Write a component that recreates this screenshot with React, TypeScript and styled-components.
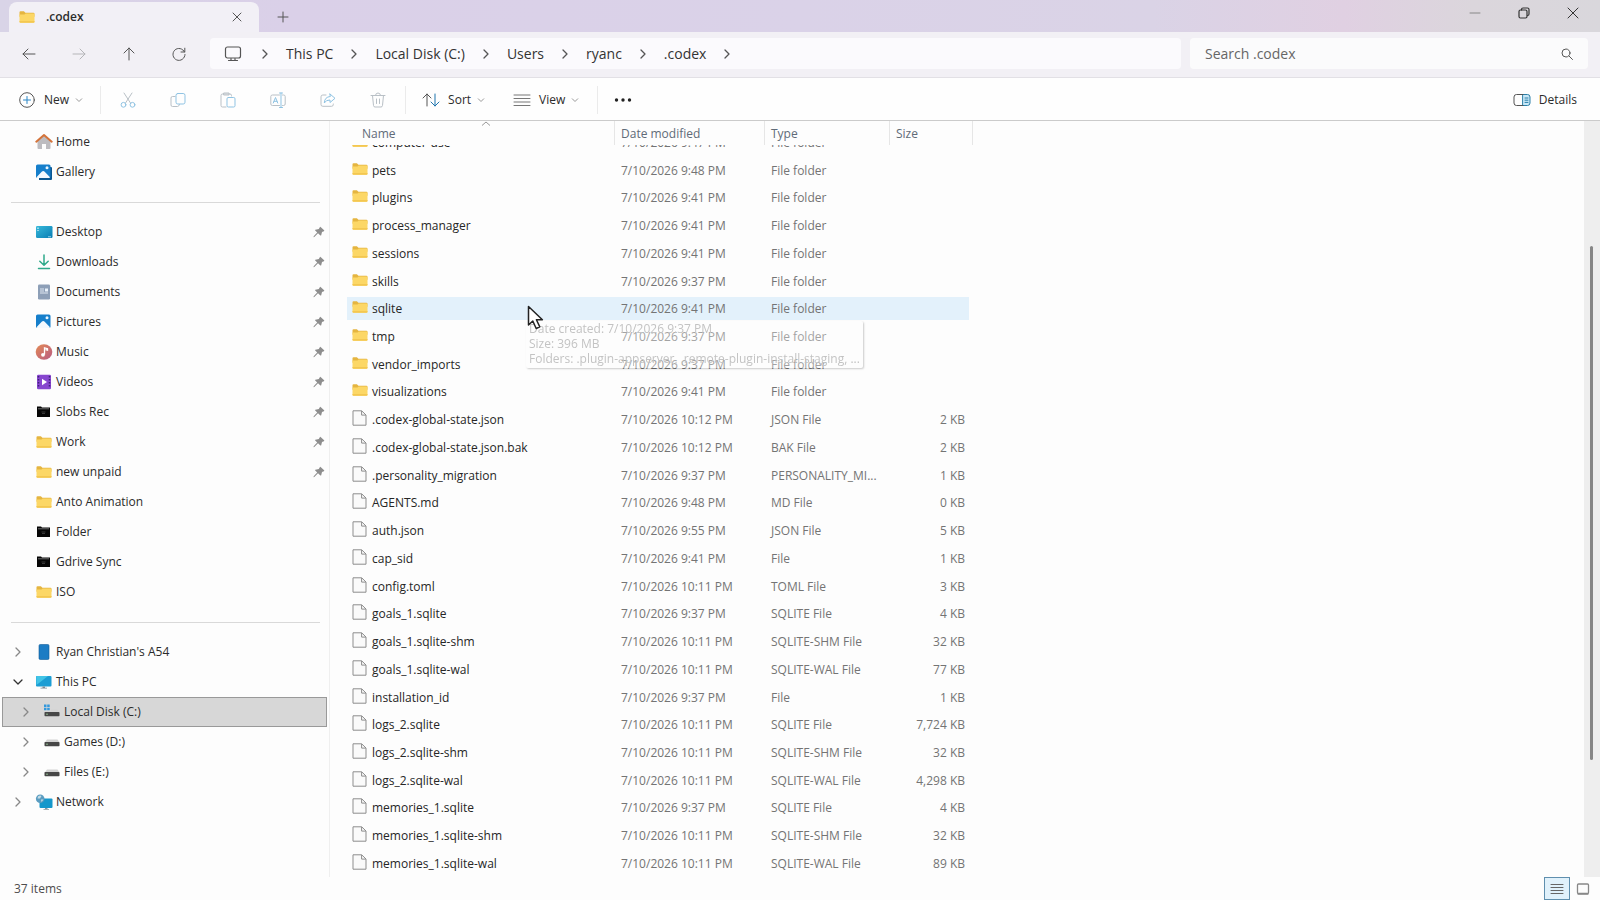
import React, { useLayoutEffect, useRef } from "react";
import styled, { createGlobalStyle, css } from "styled-components";

const GlobalStyle = createGlobalStyle`
  *, *::before, *::after { box-sizing: border-box; }
  body {
    margin: 0;
    background: #fdfdfd;
    color: #2b2b2b;
    font-family: "Open Sans", "Noto Sans", sans-serif;
    font-size: 12px;
    line-height: 16px;
  }
  button, input { font: inherit; color: inherit; }
  button { margin: 0; padding: 0; border: 0; background: none; }
  a { color: inherit; text-decoration: none; }
  svg { display: block; flex: none; }
`;

/* ---------- Window frame ---------- */

const Window = styled.div`
  display: flex;
  flex-direction: column;
  height: 100vh;
  overflow: hidden;
`;

const TitleBar = styled.header`
  display: flex;
  align-items: flex-end;
  height: 32px;
  padding-left: 9px;
  background: linear-gradient(90deg, #d9d4e7 0%, #dad0e8 18%, #dad2e8 50%, #dad3e6 72%, #e0d0e2 84%, #dbd6dc 92%, #d9d7dc 100%);
`;

const Tab = styled.div`
  display: flex;
  align-items: center;
  width: 250px;
  height: 30px;
  padding: 0 14px 0 10px;
  border-radius: 8px 8px 0 0;
  background: #f2f0f6;
  font-weight: 600;
`;

const TabTitle = styled.span`
  flex: 1;
  margin-left: 11px;
`;

const IconButton = styled.button<{ $w?: number; $h?: number }>`
  display: flex;
  align-items: center;
  justify-content: center;
  flex: none;
  width: ${(p) => p.$w ?? 36}px;
  height: ${(p) => p.$h ?? 32}px;
`;

const WindowControls = styled.div`
  display: flex;
  align-self: flex-start;
  margin-left: auto;
  padding-right: 3px;
`;

/* ---------- Navigation bar ---------- */

const NavBar = styled.div`
  display: flex;
  align-items: center;
  height: 46px;
  padding: 0 12px 2px 11px;
  border-bottom: 1px solid #e2e0e5;
  background: #f2f0f5;
`;

const NavButtons = styled.div`
  display: flex;
  gap: 14px;
  margin-right: 13px;
`;

const AddressBar = styled.nav`
  display: flex;
  align-items: center;
  flex: 1;
  height: 31px;
  padding-left: 12px;
  border-radius: 4px;
  background: #fbfafd;
  font-size: 14px;
  line-height: 20px;
`;

const Crumb = styled.a`
  color: #333;
  white-space: nowrap;
`;

const CrumbArrow = styled.span`
  display: flex;
  justify-content: center;
  width: 42px;
`;

const SearchBox = styled.label`
  display: flex;
  align-items: center;
  flex: 0 1 398px;
  height: 31px;
  margin-left: 9px;
  padding: 0 14px 0 15px;
  border-radius: 4px;
  background: #fbfbfc;
`;

const SearchInput = styled.input`
  flex: 1;
  min-width: 0;
  padding: 0;
  border: 0;
  outline: 0;
  background: transparent;
  font-size: 14px;
  line-height: 20px;
  &::placeholder { color: #666; opacity: 1; }
`;

/* ---------- Command bar ---------- */

const CommandBar = styled.div`
  display: flex;
  align-items: center;
  height: 43px;
  padding: 2px 17px 0 19px;
  border-bottom: 1px solid #cbcbcb;
  background: #fefefe;
`;

const CommandButton = styled.button<{ $gap?: number }>`
  display: flex;
  align-items: center;
  height: 32px;
  & > span { margin: 0 6px 0 ${(p) => p.$gap ?? 8}px; }
`;

const CommandGroup = styled.div`
  display: flex;
  gap: 28px;
`;

const CommandIcons = styled.div`
  display: flex;
  gap: 14px;
  margin: 0 9px;
`;

const Separator = styled.div<{ $before?: number; $after?: number }>`
  width: 1px;
  height: 28px;
  margin: 0 ${(p) => p.$after ?? 0}px 0 ${(p) => p.$before ?? 0}px;
  background: #ebebeb;
`;

const Spacer = styled.div`
  flex: 1;
`;

/* ---------- Side pane ---------- */

const Body = styled.main`
  display: flex;
  flex: 1;
  min-height: 0;
`;

const SidePane = styled.nav`
  flex: none;
  width: 330px;
  padding: 6px 2px 0;
  border-right: 1px solid #efefef;
  overflow: hidden;
`;

const SideRow = styled.div<{ $nested?: boolean; $selected?: boolean }>`
  display: flex;
  align-items: center;
  height: 30px;
  padding: 0 1px 0 ${(p) => (p.$nested ? 16 : 8)}px;
  border: 1px solid transparent;
  ${(p) =>
    p.$selected &&
    css`
      border-color: #999;
      background: #d7d7d7;
    `}
`;

const ToggleSlot = styled.span`
  display: flex;
  width: 24px;
`;

const SideLink = styled.a`
  display: flex;
  align-items: center;
  gap: 3px;
  flex: 1;
`;

const SideDivider = styled.hr`
  height: 1px;
  margin: 15px 7px 14px 9px;
  border: 0;
  background: #d9d9d9;
`;

/* ---------- File list ---------- */

const FileScroller = styled.div`
  flex: 1;
  min-width: 0;
  padding-left: 17px;
  overflow-y: auto;
  scrollbar-width: none;
`;

const FileTable = styled.table`
  width: 626px;
  height: calc(100% + 17px);
  border-collapse: separate;
  border-spacing: 0;
  table-layout: fixed;
`;

const HeadCell = styled.th`
  position: sticky;
  top: 0;
  z-index: 1;
  height: 24px;
  padding: 2px 0 0 6px;
  border-right: 1px solid #e6e6e6;
  background: #fdfdfd;
  color: #5f6b78;
  font-weight: 400;
  text-align: left;
  &:first-child { padding-left: 15px; }
`;

const SortMark = styled.svg`
  position: absolute;
  top: 0;
  left: 134px;
`;

const FileRow = styled.tr<{ $hover?: boolean }>`
  ${(p) =>
    p.$hover &&
    css`
      & > td { background: linear-gradient(#e3f1fb, #e3f1fb) center / 100% 23px no-repeat; }
      & > td:last-child { background-position: left center; background-size: 79px 23px; }
    `}
`;

const Cell = styled.td<{ $right?: boolean }>`
  padding: 2px ${(p) => (p.$right ? 8 : 6)}px 0;
  color: #747474;
  text-align: ${(p) => (p.$right ? "right" : "left")};
  white-space: nowrap;
`;

const NameCell = styled.td`
  padding: 2px 0 0 5px;
  color: #262626;
`;

const NameBox = styled.div`
  display: flex;
  align-items: center;
  gap: 4px;
  height: 16px;
  & > svg { margin-bottom: 4px; }
`;

const ScrollTrack = styled.div`
  display: flex;
  flex-direction: column;
  align-items: center;
  width: 16px;
  padding-right: 2px;
  background: #eeeeee;
`;

const ScrollThumb = styled.div`
  width: 3px;
  height: 68%;
  margin-top: 125px;
  border-radius: 2px;
  background: #868686;
`;

/* ---------- Status bar ---------- */

const StatusBar = styled.footer`
  display: flex;
  align-items: center;
  height: 23px;
  padding: 0 4px 0 14px;
  color: #4d4d4d;
`;

const ViewToggle = styled.button<{ $on?: boolean }>`
  display: flex;
  align-items: center;
  justify-content: center;
  width: 26px;
  height: 23px;
  border: 1px solid ${(p) => (p.$on ? "#5f8fae" : "transparent")};
  background: ${(p) => (p.$on ? "#e0f1fb" : "transparent")};
`;

/* ---------- Floating layer ---------- */

const Tooltip = styled.div`
  position: absolute;
  top: 321px;
  left: 526px;
  z-index: 2;
  width: 337px;
  height: 47px;
  padding: 0 3px;
  border-radius: 2px;
  box-shadow: 1px 1px 2px rgba(0, 0, 0, 0.2);
  background: rgba(253, 253, 253, 0.35);
  color: #c3c3c3;
  line-height: 15px;
  white-space: nowrap;
`;

const Pointer = styled.svg`
  position: absolute;
  top: 305px;
  left: 527px;
  z-index: 3;
`;

/* ---------- Icons ---------- */

type StrokeProps = { w?: number; h?: number; color?: string; sw?: number; children: React.ReactNode };

const Stroke = ({ w = 16, h = 16, color = "#555", sw = 1, children }: StrokeProps) => (
  <svg width={w} height={h} viewBox={`0 0 ${w} ${h}`} fill="none" stroke={color} strokeWidth={sw} strokeLinecap="round" strokeLinejoin="round">
    {children}
  </svg>
);

const ChevronRight = ({ color = "#555" }: { color?: string }) => (
  <Stroke w={12} h={12} color={color} sw={1.3}><path d="M4 2l4 4-4 4" /></Stroke>
);
const ChevronDown = ({ color = "#999", size = 8 }: { color?: string; size?: number }) => (
  <svg width={size} height={size} viewBox="0 0 8 8" fill="none" stroke={color} strokeWidth="1">
    <path d="M1 2.5L4 5.5L7 2.5" />
  </svg>
);

const FolderIcon = ({ w = 16 }: { w?: number }) => (
  <svg width={w} height={w} viewBox="0 0 16 16">
    <path d="M.5 3.200q0-1 1-1h3.400l1.500 1.500h8q1.100 0 1.100 1.100v3H.5z" fill="#e5b540" />
    <path d="M.5 5.400h5l1.200-.9h7.800q1 0 1 1v7.300q0 1-1 1h-13q-1 0-1-1z" fill="#fcd766" />
    <path d="M.5 12h15v.8q0 1-1 1h-13q-1 0-1-1z" fill="#f3c752" />
  </svg>
);

const DarkFolderIcon = () => (
  <svg width="18" height="16" viewBox="0 0 18 16">
    <path d="M2 2.500h4l1 1h8V13H2z" fill="#060606" />
    <path d="M3 4.800h11" stroke="#777" strokeWidth=".9" />
    <path d="M6.500 8h4M7 9.500h3" stroke="#444" strokeWidth=".8" />
  </svg>
);

const FileIcon = () => (
  <svg width="16" height="16" viewBox="0 0 16 16">
    <path d="M1 .8h8.700l4.300 4.200v10.200H1z" fill="#fafafa" stroke="#8d8d8d" />
    <path d="M9.600 1v4.100h4.200" fill="none" stroke="#8d8d8d" />
  </svg>
);

const HomeIcon = () => (
  <svg width="18" height="18" viewBox="0 0 18 18">
    <path d="M2.500 7.500L9 2.500l6.500 5V15q0 1-1 1H11v-5H7v5H3.500q-1 0-1-1z" fill="#bdbcc0" />
    <path d="M1.300 8.700L9 2l7.700 6.700" fill="none" stroke="#d4733a" strokeWidth="2" strokeLinecap="round" strokeLinejoin="round" />
  </svg>
);

const PictureIcon = ({ stacked }: { stacked?: boolean }) => (
  <svg width="18" height="18" viewBox="0 0 18 18">
    {stacked && <path d="M4 4h12q1 0 1 1v11q0 1-1 1H4z" fill="#0b5791" />}
    <rect x="1" y="1.500" width="14.500" height="13.500" rx="1.500" fill="#167fcb" />
    <path d="M1.500 14.200l5.200-5.400q1.500-1.400 3 0l5.300 5.400q-.2.800-1 .8H2.500q-.8 0-1-.8z" fill="#f3f9fe" />
    <circle cx="12" cy="4.800" r="1.500" fill="#e8f5ff" />
  </svg>
);

const DesktopIcon = () => (
  <svg width="18" height="16" viewBox="0 0 18 16">
    <defs>
      <linearGradient id="desk" x1="0" y1="0" x2="1" y2="1">
        <stop offset="0" stopColor="#38b9da" />
        <stop offset="1" stopColor="#087db4" />
      </linearGradient>
    </defs>
    <rect x="1" y="2" width="16.500" height="12" rx="1.200" fill="url(#desk)" />
    <path d="M3 3.500v1.500M3 6v1" stroke="#d8f4fb" strokeWidth="1.200" />
    <path d="M13 12.800h3" stroke="#bfe9f5" strokeWidth=".8" />
  </svg>
);

const DownloadIcon = () => (
  <Stroke w={18} h={18} color="#2fa98a" sw={1.5}><path d="M9 2v10M4.800 8.200L9 12.300l4.200-4.100M3.500 15.500h11" /></Stroke>
);

const DocumentIcon = () => (
  <svg width="18" height="16" viewBox="0 0 18 16">
    <rect x="3" y="0.500" width="12" height="15" rx="1.200" fill="#8d9fb7" />
    <path d="M5 5h4M5 7h4M5 9h8" stroke="#dfe7f1" />
    <rect x="10" y="4.500" width="3" height="3" fill="#e9f2fb" />
  </svg>
);

const MusicIcon = () => (
  <svg width="18" height="16" viewBox="0 0 18 16">
    <defs>
      <linearGradient id="music" x1="0" y1="0" x2="1" y2="1">
        <stop offset="0" stopColor="#e38a55" />
        <stop offset="1" stopColor="#b85b83" />
      </linearGradient>
    </defs>
    <ellipse cx="9" cy="8" rx="8.300" ry="7.700" fill="url(#music)" />
    <path d="M9.500 10.500V3.800l3 .9v1.500l-2-.5" fill="none" stroke="#fff" strokeWidth="1.300" />
    <circle cx="8" cy="10.800" r="1.900" fill="#fff" />
  </svg>
);

const VideoIcon = () => (
  <svg width="18" height="16" viewBox="0 0 18 16">
    <rect x="2" y="0.800" width="14" height="14.400" rx="1.200" fill="#8746cf" />
    <path d="M3.500 2v12M14.500 2v12" stroke="#41207a" strokeWidth="1.500" strokeDasharray="1.500 1.500" />
    <path d="M7 4.800l5 3.200-5 3.200z" fill="#fff" />
  </svg>
);

const PhoneIcon = () => (
  <svg width="18" height="16" viewBox="0 0 18 16">
    <rect x="4" y="0.500" width="10" height="15" rx="1.200" fill="#1c7cc4" stroke="#125c98" strokeWidth=".6" />
  </svg>
);

const MonitorIcon = () => (
  <svg width="18" height="16" viewBox="0 0 18 16">
    <rect x="1" y="2" width="15.500" height="10.500" rx="1" fill="#1b9dd4" />
    <path d="M1.500 11L13 2h-11q-.8 0-.8 1z" fill="#42c4e6" />
    <path d="M7.500 12.500h2.500v1.200H12v.9H5.500v-.9h2z" fill="#7d8a94" />
  </svg>
);

const DriveIcon = ({ system }: { system?: boolean }) => (
  <svg width="18" height="16" viewBox="0 0 18 16">
    <path d="M4 5.500h10.500l2 3H1.800z" fill="#d3d3d3" />
    <rect x="1.500" y="8" width="15" height="4.200" rx=".8" fill="#474747" />
    <path d="M3 10.200h2" stroke="#9bd09b" strokeWidth=".8" />
    {system && (
      <>
        <rect x="0" y="0" width="8" height="7" fill="#d7d7d7" />
        <path d="M1 .5h2.500v2.500H1zM4.200.5h2.500v2.500H4.200zM1 3.700h2.500v2.500H1zM4.200 3.700h2.500v2.500H4.200z" fill="#3398dc" />
      </>
    )}
  </svg>
);

const NetworkIcon = () => (
  <svg width="18" height="16" viewBox="0 0 18 16">
    <rect x="4.500" y="4.500" width="13" height="9.500" rx="1" fill="#1597cb" />
    <path d="M10 14h2.500v1H14v.8H8.500V15H10z" fill="#8a969e" />
    <circle cx="5.200" cy="4.800" r="4.300" fill="#5a9cc0" />
    <path d="M3 2.500q2-1.500 3.500-.5L5 4.500H2.500zM6 5.500h2.500L6.500 8z" fill="#c4dce7" />
  </svg>
);

const PinIcon = () => (
  <svg width="12" height="12" viewBox="0 0 12 12" fill="#8e8e8e">
    <path d="M6.800 1.200Q7 .6 7.600 1l3.500 3.300q.5.500-.2.900L9 6 8.200 9.200q-.2.700-.8.200L5 7.300 1.300 11l-.8.200.2-.9 3.500-3.700-2-2q-.5-.5.200-.8L5.800 3z" />
  </svg>
);

/* ---------- Data ---------- */

type SideItem = {
  label: string;
  icon: React.ReactNode;
  pinned?: boolean;
  nested?: boolean;
  selected?: boolean;
  open?: boolean;
  toggle?: boolean;
};

const sideFolder = <svg width="18" height="16" viewBox="-1 0 18 16"><FolderIcon /></svg>;

const sideGroups: SideItem[][] = [
  [
    { label: "Home", icon: <HomeIcon /> },
    { label: "Gallery", icon: <PictureIcon stacked /> },
  ],
  [
    { label: "Desktop", icon: <DesktopIcon />, pinned: true },
    { label: "Downloads", icon: <DownloadIcon />, pinned: true },
    { label: "Documents", icon: <DocumentIcon />, pinned: true },
    { label: "Pictures", icon: <PictureIcon />, pinned: true },
    { label: "Music", icon: <MusicIcon />, pinned: true },
    { label: "Videos", icon: <VideoIcon />, pinned: true },
    { label: "Slobs Rec", icon: <DarkFolderIcon />, pinned: true },
    { label: "Work", icon: sideFolder, pinned: true },
    { label: "new unpaid", icon: sideFolder, pinned: true },
    { label: "Anto Animation", icon: sideFolder },
    { label: "Folder", icon: <DarkFolderIcon /> },
    { label: "Gdrive Sync", icon: <DarkFolderIcon /> },
    { label: "ISO", icon: sideFolder },
  ],
  [
    { label: "Ryan Christian's A54", icon: <PhoneIcon />, toggle: true },
    { label: "This PC", icon: <MonitorIcon />, toggle: true, open: true },
    { label: "Local Disk (C:)", icon: <DriveIcon system />, toggle: true, nested: true, selected: true },
    { label: "Games (D:)", icon: <DriveIcon />, toggle: true, nested: true },
    { label: "Files (E:)", icon: <DriveIcon />, toggle: true, nested: true },
    { label: "Network", icon: <NetworkIcon />, toggle: true },
  ],
];

const files: [string, string, string, string][] = [
  ["computer-use", "9:47 PM", "File folder", ""],
  ["pets", "9:48 PM", "File folder", ""],
  ["plugins", "9:41 PM", "File folder", ""],
  ["process_manager", "9:41 PM", "File folder", ""],
  ["sessions", "9:41 PM", "File folder", ""],
  ["skills", "9:37 PM", "File folder", ""],
  ["sqlite", "9:41 PM", "File folder", ""],
  ["tmp", "9:37 PM", "File folder", ""],
  ["vendor_imports", "9:37 PM", "File folder", ""],
  ["visualizations", "9:41 PM", "File folder", ""],
  [".codex-global-state.json", "10:12 PM", "JSON File", "2 KB"],
  [".codex-global-state.json.bak", "10:12 PM", "BAK File", "2 KB"],
  [".personality_migration", "9:37 PM", "PERSONALITY_MI...", "1 KB"],
  ["AGENTS.md", "9:48 PM", "MD File", "0 KB"],
  ["auth.json", "9:55 PM", "JSON File", "5 KB"],
  ["cap_sid", "9:41 PM", "File", "1 KB"],
  ["config.toml", "10:11 PM", "TOML File", "3 KB"],
  ["goals_1.sqlite", "9:37 PM", "SQLITE File", "4 KB"],
  ["goals_1.sqlite-shm", "10:11 PM", "SQLITE-SHM File", "32 KB"],
  ["goals_1.sqlite-wal", "10:11 PM", "SQLITE-WAL File", "77 KB"],
  ["installation_id", "9:37 PM", "File", "1 KB"],
  ["logs_2.sqlite", "10:11 PM", "SQLITE File", "7,724 KB"],
  ["logs_2.sqlite-shm", "10:11 PM", "SQLITE-SHM File", "32 KB"],
  ["logs_2.sqlite-wal", "10:11 PM", "SQLITE-WAL File", "4,298 KB"],
  ["memories_1.sqlite", "9:37 PM", "SQLITE File", "4 KB"],
  ["memories_1.sqlite-shm", "10:11 PM", "SQLITE-SHM File", "32 KB"],
  ["memories_1.sqlite-wal", "10:11 PM", "SQLITE-WAL File", "89 KB"],
];

const crumbs = ["This PC", "Local Disk (C:)", "Users", "ryanc", ".codex"];

const blue = "#8fc3e3";
const grey = "#b9c0c6";

const commandIcons: { label: string; icon: React.ReactNode }[] = [
  {
    label: "Cut",
    icon: (
      <Stroke color={grey}>
        <path d="M4 1l6.500 10M12 1L5.500 11" />
        <circle cx="3.500" cy="12.800" r="2.400" stroke={blue} />
        <circle cx="12.500" cy="12.800" r="2.400" stroke={blue} />
      </Stroke>
    ),
  },
  {
    label: "Copy",
    icon: (
      <Stroke color={grey}>
        <path d="M5 4.500H2.500Q1 4.500 1 6v7q0 1.500 1.500 1.500h5Q9 14.500 9.500 12.500" />
        <rect x="6" y="1.500" width="9" height="10.500" rx="1.800" stroke={blue} />
      </Stroke>
    ),
  },
  {
    label: "Paste",
    icon: (
      <Stroke color={grey}>
        <path d="M6 15H2.500Q1 15 1 13.500V3.500Q1 2 2.500 2H10q1.500 0 1.500 1.500V4M4 1h5v2H4z" />
        <rect x="7" y="5.500" width="8" height="9.500" rx="1.300" stroke={blue} />
      </Stroke>
    ),
  },
  {
    label: "Rename",
    icon: (
      <Stroke color={grey}>
        <path d="M9.500 13.500H2.500Q.8 13.500.8 12V4.500Q.8 3 2.500 3h7M12.500 3h1q1.700 0 1.700 1.500V12q0 1.500-1.700 1.500h-1" />
        <path d="M9.500 1h3M9.500 15.500h3M11 1v14.500M3.300 11L5.500 5.500 7.700 11M4 9.300h3" stroke={blue} />
      </Stroke>
    ),
  },
  {
    label: "Share",
    icon: (
      <Stroke color={grey}>
        <path d="M6 3H2.800Q1 3 1 4.800v7.700q0 1.800 1.800 1.800h8.700q1.800 0 1.800-1.800V12" />
        <path d="M10 2l5 4.300-5 4.200V8Q6 7.800 4.300 11 4.500 5 10 4.500z" stroke={blue} />
      </Stroke>
    ),
  },
  {
    label: "Delete",
    icon: (
      <Stroke color={grey}>
        <path d="M1 3.500h14M5.500 3.200Q5.800 1 8 1t2.500 2.200M2.500 3.500l1 10q.2 1.500 1.500 1.500h6q1.300 0 1.500-1.500l1-10M6.500 7v4.500M9.500 7v4.500" />
      </Stroke>
    ),
  },
];

/* ---------- Page ---------- */

const SideEntry = ({ item }: { item: SideItem }) => (
  <SideRow $nested={item.nested} $selected={item.selected}>
    <ToggleSlot>
      {item.toggle && (
        <IconButton $w={14} $h={16} aria-label={`Expand ${item.label}`}>
          {item.open ? <Stroke w={12} h={12} color="#333" sw={1.3}><path d="M2 4l4 4 4-4" /></Stroke> : <ChevronRight color="#888" />}
        </IconButton>
      )}
    </ToggleSlot>
    <SideLink href="#">
      {item.icon}
      {item.label}
    </SideLink>
    {item.pinned && <PinIcon />}
  </SideRow>
);

export default function App() {
  const scroller = useRef<HTMLDivElement>(null);

  useLayoutEffect(() => {
    if (scroller.current) scroller.current.scrollTop = 17;
  }, []);

  return (
    <>
      <GlobalStyle />
      <Window>
        <TitleBar>
          <Tab>
            <FolderIcon />
            <TabTitle>.codex</TabTitle>
            <IconButton $w={16} $h={16} aria-label="Close tab">
              <Stroke w={10} h={10}><path d="M1 1l8 8M9 1L1 9" /></Stroke>
            </IconButton>
          </Tab>
          <IconButton $w={48} $h={30} aria-label="New tab">
            <Stroke w={12} h={12}><path d="M6 1v10M1 6h10" /></Stroke>
          </IconButton>
          <WindowControls>
            <IconButton $w={48} $h={26} aria-label="Minimize">
              <Stroke w={12} h={12} color="#888"><path d="M1 6h10" /></Stroke>
            </IconButton>
            <IconButton $w={49} $h={26} aria-label="Restore">
              <Stroke w={12} h={12} color="#333" sw={1.2}>
                <rect x="1" y="3" width="8" height="8" rx="1.500" />
                <path d="M3.500 3V2.500Q3.500 1 5 1h4.500Q11 1 11 2.500V7q0 1.500-1.500 1.500" />
              </Stroke>
            </IconButton>
            <IconButton $w={49} $h={26} aria-label="Close">
              <Stroke w={12} h={12} color="#333"><path d="M1 1l10 10M11 1L1 11" /></Stroke>
            </IconButton>
          </WindowControls>
        </TitleBar>

        <NavBar>
          <NavButtons>
            <IconButton aria-label="Back"><Stroke><path d="M14 8H2M7 3L2 8l5 5" /></Stroke></IconButton>
            <IconButton aria-label="Forward"><Stroke color="#b5b5b8"><path d="M2 8h12M9 3l5 5-5 5" /></Stroke></IconButton>
            <IconButton aria-label="Up"><Stroke><path d="M8 14V2M3 7l5-5 5 5" /></Stroke></IconButton>
            <IconButton aria-label="Refresh">
              <Stroke><path d="M13.500 6A6 6 0 1 0 14 8.500M13.800 2.200V6H10" /></Stroke>
            </IconButton>
          </NavButtons>
          <AddressBar aria-label="Address">
            <Stroke w={22} h={16} sw={1.2}>
              <rect x="3.500" y="1" width="15" height="11" rx="2" />
              <path d="M6.500 14.500h9M9 12.500v2M13 12.500v2" />
            </Stroke>
            {crumbs.map((crumb) => (
              <React.Fragment key={crumb}>
                <CrumbArrow><ChevronRight /></CrumbArrow>
                <Crumb href="#">{crumb}</Crumb>
              </React.Fragment>
            ))}
            <CrumbArrow><ChevronRight /></CrumbArrow>
          </AddressBar>
          <SearchBox>
            <SearchInput type="text" aria-label="Search .codex" placeholder="Search .codex" />
            <Stroke w={14} h={14}><circle cx="6" cy="6" r="4" /><path d="M9 9l3.500 3.500" /></Stroke>
          </SearchBox>
        </NavBar>

        <CommandBar>
          <CommandButton $gap={9}>
            <Stroke>
              <circle cx="8" cy="8" r="7.300" />
              <path d="M8 4.500v7M4.500 8h7" stroke="#2b86c5" />
            </Stroke>
            <span>New</span>
            <ChevronDown />
          </CommandButton>
          <Separator $before={17} />
          <CommandIcons>
            {commandIcons.map(({ label, icon }) => (
              <IconButton key={label} aria-label={label}>{icon}</IconButton>
            ))}
          </CommandIcons>
          <Separator $after={16} />
          <CommandGroup>
            <CommandButton>
              <Stroke w={18}>
                <path d="M5 14V2M1 6l4-4 4 4" />
                <path d="M13 2v12M9 10l4 4 4-4" stroke="#1f74ad" />
              </Stroke>
              <span>Sort</span>
              <ChevronDown />
            </CommandButton>
            <CommandButton>
              <Stroke w={18} color="#777"><path d="M1 3h16M1 6.500h16M1 10h16M1 13.500h16" /></Stroke>
              <span>View</span>
              <ChevronDown />
            </CommandButton>
          </CommandGroup>
          <Separator $before={18} $after={8} />
          <IconButton $w={34} aria-label="More">
            <svg width="18" height="4" viewBox="0 0 18 4" fill="#222">
              <circle cx="2.500" cy="2" r="1.700" /><circle cx="9" cy="2" r="1.700" /><circle cx="15.500" cy="2" r="1.700" />
            </svg>
          </IconButton>
          <Spacer />
          <CommandButton>
            <Stroke w={18}>
              <path d="M10 2.500h4.500Q17 2.500 17 5v6q0 2.500-2.500 2.500H10z" fill="#c9e8f7" stroke="#2b7fa8" />
              <path d="M10 2.500H3.500Q1 2.500 1 5v6q0 2.500 2.500 2.500H10" />
              <path d="M12 6h3M12 8.200h3M12 10.400h3" stroke="#2b7fa8" />
            </Stroke>
            <span>Details</span>
          </CommandButton>
        </CommandBar>

        <Body>
          <SidePane aria-label="Folders">
            {sideGroups.map((group, i) => (
              <React.Fragment key={i}>
                {i > 0 && <SideDivider />}
                {group.map((item) => <SideEntry key={item.label} item={item} />)}
              </React.Fragment>
            ))}
          </SidePane>

          <FileScroller ref={scroller}>
            <FileTable>
              <colgroup>
                <col width="268" />
                <col width="150" />
                <col width="125" />
                <col width="83" />
              </colgroup>
              <thead>
                <tr>
                  <HeadCell>
                    Name
                    <SortMark width="10" height="6" viewBox="0 0 10 6" fill="none" stroke="#999"><path d="M1 4.500L5 1l4 3.500" /></SortMark>
                  </HeadCell>
                  <HeadCell>Date modified</HeadCell>
                  <HeadCell>Type</HeadCell>
                  <HeadCell>Size</HeadCell>
                </tr>
              </thead>
              <tbody>
                {files.map(([name, time, type, size]) => (
                  <FileRow key={name} $hover={name === "sqlite"}>
                    <NameCell>
                      <NameBox>
                        {type === "File folder" ? <FolderIcon /> : <FileIcon />}
                        {name}
                      </NameBox>
                    </NameCell>
                    <Cell>7/10/2026 {time}</Cell>
                    <Cell>{type}</Cell>
                    <Cell $right>{size}</Cell>
                  </FileRow>
                ))}
              </tbody>
            </FileTable>
          </FileScroller>
          <ScrollTrack><ScrollThumb /></ScrollTrack>
        </Body>

        <StatusBar>
          37 items
          <Spacer />
          <ViewToggle $on aria-label="Details view">
            <Stroke w={14} h={14} color="#666"><path d="M1 2.500h12M1 5.500h12M1 8.500h12M1 11.500h12" /></Stroke>
          </ViewToggle>
          <ViewToggle aria-label="Large icons view">
            <Stroke w={14} h={14} color="#888" sw={1.300}><rect x="1.500" y="2" width="11" height="9.500" rx="1" /><path d="M2 12h10" /></Stroke>
          </ViewToggle>
        </StatusBar>
      </Window>

      <Tooltip role="tooltip">
        <div>Date created: 7/10/2026 9:37 PM</div>
        <div>Size: 396 MB</div>
        <div>Folders: .plugin-appserver, .remote-plugin-install-staging, ...</div>
      </Tooltip>
      <Pointer width="18" height="26" viewBox="0 0 18 26">
        <path d="M1.500 1.500v18.500l4.300-4 3.400 7.500 3.600-1.600-3.400-7.200h6z" fill="#fff" stroke="#222" strokeWidth="1.500" strokeLinejoin="round" />
      </Pointer>
    </>
  );
}
